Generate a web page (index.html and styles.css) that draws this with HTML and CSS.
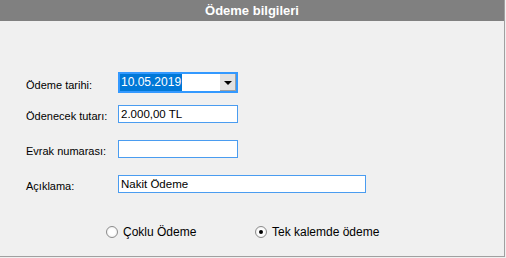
FILE: index.html
```html
<!DOCTYPE html>
<html lang="tr">
<head>
  <meta charset="UTF-8">
  <title>Ödeme bilgileri</title>
  <link rel="stylesheet" href="styles.css">
</head>
<body>
  <div class="panel">
    <div class="title">Ödeme bilgileri</div>
    <div class="form">
      <div class="row combo-row">
        <label>Ödeme tarihi:</label>
        <div class="combo">
          <span class="value"><span class="sel">10.05.2019</span></span>
          <span class="drop"><i></i></span>
        </div>
      </div>
      <div class="row">
        <label>Ödenecek tutarı:</label>
        <div class="field">2.000,00 TL</div>
      </div>
      <div class="row">
        <label>Evrak numarası:</label>
        <div class="field"></div>
      </div>
      <div class="row">
        <label>Açıklama:</label>
        <div class="field wide">Nakit Ödeme</div>
      </div>
    </div>
    <div class="options">
      <span class="radio"><i></i>Çoklu Ödeme</span>
      <span class="radio on"><i></i>Tek kalemde ödeme</span>
    </div>
  </div>
</body>
</html>
```

FILE: styles.css
```css
body {
  margin: 0;
  background: #f0f0f0;
  font-family: "Liberation Sans", Arial, sans-serif;
  font-size: 11px;
  color: #000;
}
.panel {
  width: 504px;
  height: 256px;
  border-right: 1px solid #a0a0a0;
  border-bottom: 1px solid #a0a0a0;
  background: #f0f0f0;
}
.title {
  height: 21px;
  line-height: 21px;
  background: #808080;
  color: #fff;
  font-weight: bold;
  font-size: 13px;
  text-align: center;
}
.form {
  padding: 51px 0 0 26px;
}
.row {
  display: flex;
  align-items: center;
  height: 18px;
  margin-bottom: 17px;
}
.row label {
  width: 92px;
  flex: none;
  padding-top: 4px;
}
.combo-row {
  height: 21px;
  margin-bottom: 12px;
}
.combo {
  box-sizing: border-box;
  width: 120px;
  height: 21px;
  border: 2px solid #3399ff;
  background: #fff;
  display: flex;
}
.combo .value {
  flex: 1;
}
.combo .sel {
  display: inline-block;
  background: #0078d7;
  color: #fff;
  font-size: 12px;
  height: 17px;
  line-height: 17px;
  padding: 0 1px;
}
.combo .drop {
  width: 16px;
  background: #e1e1e1;
  box-shadow: inset -1px -1px 0 #a0a0a0;
  display: flex;
  align-items: center;
  justify-content: center;
}
.combo .drop i {
  width: 0;
  height: 0;
  border-left: 4px solid transparent;
  border-right: 4px solid transparent;
  border-top: 4px solid #000;
}
.field {
  box-sizing: border-box;
  width: 120px;
  height: 18px;
  line-height: 16px;
  border: 1px solid #4a9cf0;
  background: #fff;
  padding: 0 2px;
  font-size: 11.5px;
}
.field.wide {
  width: 248px;
}
.options {
  display: flex;
  padding: 15px 0 0 106px;
  font-size: 12px;
}
.radio {
  display: flex;
  align-items: center;
  width: 149px;
}
.radio i {
  box-sizing: border-box;
  width: 12px;
  height: 12px;
  border-radius: 50%;
  border: 1px solid #8c8c8c;
  background: radial-gradient(circle, #fff 40%, #e6e6e6 100%);
  margin-right: 5px;
  display: flex;
  align-items: center;
  justify-content: center;
}
.radio.on i::after {
  content: "";
  width: 4px;
  height: 4px;
  border-radius: 50%;
  background: #000;
}
```
